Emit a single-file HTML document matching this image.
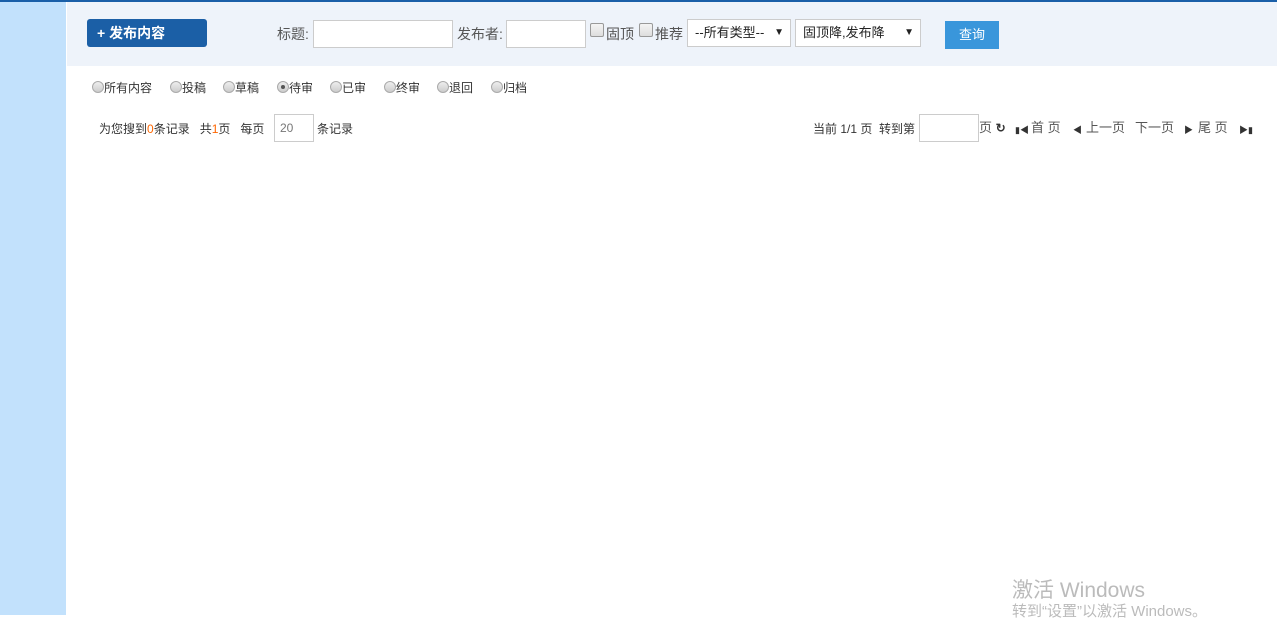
<!DOCTYPE html>
<html><head><meta charset="utf-8"><style>
*{margin:0;padding:0;box-sizing:border-box}
body{width:1277px;height:615px;overflow:hidden;background:#fff;font-family:"Liberation Sans","Noto Sans CJK SC",sans-serif;position:relative;color:#333}
.a{position:absolute;white-space:nowrap}
.sb{left:0;top:0;width:66px;height:615px;background:#c2e1fc}
.topl{left:0;top:0;width:1277px;height:2px;background:#1a5fa8}
.hd{left:67px;top:2px;width:1210px;height:64px;background:#eef3fa}
.btn{left:87px;top:19px;width:120px;height:28px;background:#1b5fa6;border-radius:3px;color:#fff;font-weight:bold;font-size:14px;line-height:28px;padding-left:10px}
.lbl{font-size:14px;color:#555;line-height:16px}
.inp{background:#fff;border:1px solid #ccc}
.cb{width:14px;height:14px;border:1px solid #999;border-radius:2px;background:linear-gradient(#f4f4f4,#ddd)}
.sel{background:#fff;border:1px solid #ccc;font-size:13px;color:#222;line-height:26px;padding-left:7px}
.sel b{position:absolute;right:6px;top:0;font-size:10px}
.q{left:945px;top:21px;width:54px;height:28px;background:#3996db;color:#fff;font-size:13px;line-height:28px;text-align:center}
.r{font-size:12px;color:#333;line-height:14px}
.r i{display:inline-block;width:12px;height:12px;border:1px solid #aaa;border-radius:50%;background:linear-gradient(#eee,#ccc);vertical-align:-1px;position:relative}
.r i.on:after{content:"";position:absolute;left:3px;top:3px;width:4px;height:4px;border-radius:50%;background:#555}
.p{font-size:12px;color:#333;line-height:14px}
.red{color:#f60}
.pg{font-size:13px;color:#555;line-height:14px}
.ic{font-size:9px;color:#333}
.wm1{left:1012px;top:574px;font-size:21px;color:#bbb}
.wm2{left:1012px;top:600px;font-size:15px;color:#bbb}
</style></head><body>
<div class="a sb"></div>
<div class="a topl"></div>
<div class="a hd"></div>
<div class="a btn">+ 发布内容</div>
<div class="a lbl" style="left:277px;top:26px">标题:</div>
<div class="a inp" style="left:313px;top:20px;width:140px;height:28px"></div>
<div class="a lbl" style="left:457px;top:26px">发布者:</div>
<div class="a inp" style="left:506px;top:20px;width:80px;height:28px"></div>
<div class="a cb" style="left:590px;top:23px"></div>
<div class="a lbl" style="left:606px;top:26px">固顶</div>
<div class="a cb" style="left:639px;top:23px"></div>
<div class="a lbl" style="left:655px;top:26px">推荐</div>
<div class="a sel" style="left:687px;top:19px;width:104px;height:28px">--所有类型--<b>▼</b></div>
<div class="a sel" style="left:795px;top:19px;width:126px;height:28px">固顶降,发布降<b>▼</b></div>
<div class="a q">查询</div>
<div class="a r" style="left:92px;top:81px"><i></i>所有内容</div>
<div class="a r" style="left:170px;top:81px"><i></i>投稿</div>
<div class="a r" style="left:223px;top:81px"><i></i>草稿</div>
<div class="a r" style="left:277px;top:81px"><i class="on"></i>待审</div>
<div class="a r" style="left:330px;top:81px"><i></i>已审</div>
<div class="a r" style="left:384px;top:81px"><i></i>终审</div>
<div class="a r" style="left:437px;top:81px"><i></i>退回</div>
<div class="a r" style="left:491px;top:81px"><i></i>归档</div>
<div class="a p" style="left:99px;top:122px">为您搜到<span class="red">0</span>条记录&nbsp;&nbsp;&nbsp;共<span class="red">1</span>页&nbsp;&nbsp;&nbsp;每页</div>
<div class="a inp" style="left:274px;top:114px;width:40px;height:28px;font-size:12px;color:#777;line-height:26px;padding-left:5px">20</div>
<div class="a p" style="left:317px;top:122px">条记录</div>
<div class="a p" style="left:813px;top:122px">当前 1/1 页&nbsp;&nbsp;转到第</div>
<div class="a inp" style="left:919px;top:114px;width:60px;height:28px"></div>
<div class="a pg" style="left:979px;top:121px">页 <b style="font-size:12px;color:#333">↻</b></div>
<div class="a ic" style="left:1015px;top:123px">▮◀</div>
<div class="a pg" style="left:1031px;top:121px">首 页</div>
<div class="a ic" style="left:1073px;top:123px">◀</div>
<div class="a pg" style="left:1086px;top:121px">上一页</div>
<div class="a pg" style="left:1135px;top:121px">下一页</div>
<div class="a ic" style="left:1184px;top:123px">▶</div>
<div class="a pg" style="left:1198px;top:121px">尾 页</div>
<div class="a ic" style="left:1239px;top:123px">▶▮</div>
<div class="a wm1">激活 Windows</div>
<div class="a wm2">转到“设置”以激活 Windows。</div>
</body></html>
